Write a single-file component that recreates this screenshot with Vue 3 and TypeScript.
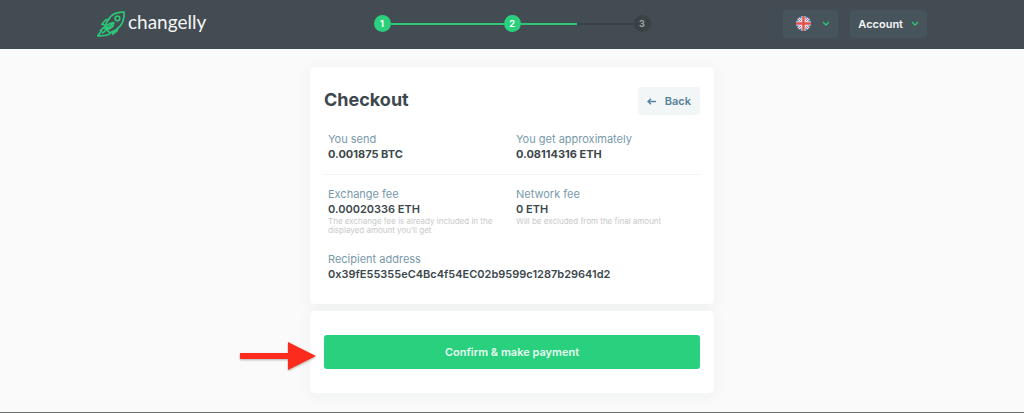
<script setup lang="ts">
interface Step {
  label: string
  done: boolean
}

interface Detail {
  title: string
  value: string
  note?: string
}

const steps: Step[] = [
  { label: '1', done: true },
  { label: '2', done: true },
  { label: '3', done: false },
]

const amounts: Detail[] = [
  { title: 'You send', value: '0.001875 BTC' },
  { title: 'You get approximately', value: '0.08114316 ETH' },
]

const fees: Detail[] = [
  {
    title: 'Exchange fee',
    value: '0.00020336 ETH',
    note: 'The exchange fee is already included in the displayed amount you’ll get',
  },
  { title: 'Network fee', value: '0 ETH', note: 'Will be excluded from the final amount' },
]

const recipient: Detail = {
  title: 'Recipient address',
  value: '0x39fE55355eC4Bc4f54EC02b9599c1287b29641d2',
}
</script>

<template>
  <div class="page">
    <header class="header">
      <div class="header-inner">
        <a class="logo" href="#">
          <svg class="rocket" viewBox="50 28 85 78" aria-hidden="true">
            <path d="M132 31C112 30 95 37 86 51C79 61 75 70 73 80L90 94C101 90 113 82 121 72C130 61 133 48 132 31Z" />
            <path d="M86 53L76 55L65 68L76 71" />
            <path d="M113 80L111 88L98 98L97 90" />
            <circle cx="112" cy="50" r="7" />
            <path d="M79 84C77 74 82 65 101 63C100 73 94 82 79 84ZM79 84L94 69" />
            <path d="M71 77L60 87L64 88L52 103C65 104 78 102 89 97" />
            <path d="M67 94L75 88" />
          </svg>
          <span>changelly</span>
        </a>

        <ol class="steps">
          <li v-for="step in steps" :key="step.label" class="step" :class="{ done: step.done }">
            <span class="dot">{{ step.label }}</span>
          </li>
        </ol>

        <div class="actions">
          <button class="menu language" type="button" aria-label="Language: English">
            <svg class="flag" viewBox="0 0 30 30" aria-hidden="true">
              <clipPath id="flag-round"><circle cx="15" cy="15" r="15" /></clipPath>
              <g clip-path="url(#flag-round)">
                <path fill="#3f8ccb" d="M0 0h30v30H0z" />
                <path stroke="#f5eded" stroke-width="5" d="M2 2l26 26M28 2L2 28" />
                <path stroke="#e0524c" stroke-width="2" d="M2 2l26 26M28 2L2 28" />
                <path stroke="#f5eded" stroke-width="8" d="M15 0v30M0 15h30" />
                <path stroke="#e0524c" stroke-width="5" d="M15 0v30M0 15h30" />
              </g>
            </svg>
            <svg class="chevron" viewBox="0 0 8 5" aria-hidden="true"><path d="M1 1l3 3 3-3" /></svg>
          </button>
          <button class="menu account" type="button">
            <span>Account</span>
            <svg class="chevron" viewBox="0 0 8 5" aria-hidden="true"><path d="M1 1l3 3 3-3" /></svg>
          </button>
        </div>
      </div>
    </header>

    <main class="checkout">
      <section class="card summary">
        <div class="title-row">
          <h1>Checkout</h1>
          <button class="back" type="button">
            <svg viewBox="0 0 9 7" aria-hidden="true"><path d="M9 3.5H1M4 .8L1 3.5l3 2.7" /></svg>
            <span>Back</span>
          </button>
        </div>
        <dl class="details amounts">
          <div v-for="item in amounts" :key="item.title">
            <dt>{{ item.title }}</dt>
            <dd>{{ item.value }}</dd>
          </div>
        </dl>
        <dl class="details fees">
          <div v-for="item in fees" :key="item.title">
            <dt>{{ item.title }}</dt>
            <dd>{{ item.value }}</dd>
            <dd class="note">{{ item.note }}</dd>
          </div>
        </dl>
        <dl class="details recipient">
          <div>
            <dt>{{ recipient.title }}</dt>
            <dd>{{ recipient.value }}</dd>
          </div>
        </dl>
      </section>

      <section class="card payment">
        <button class="confirm" type="button">Confirm &amp; make payment</button>
        <svg class="pointer" viewBox="0 0 76 28" aria-hidden="true">
          <path d="M0 11h48V0l28 14-28 14V17H0z" />
        </svg>
      </section>
    </main>
  </div>
</template>

<style>
body {
  background: #fafafa;
}
</style>

<style scoped>
.page {
  box-sizing: border-box;
  min-height: 100vh;
  border-bottom: 1px solid #6b706f;
  background: #fafafa;
  color: #3d484d;
  font-family: Inter, "Open Sans", sans-serif;
  font-size: 11px;
  line-height: 14px;
}

button {
  border: 0;
  font: inherit;
  cursor: pointer;
}

.header {
  background: #444c53;
}

.header-inner {
  display: grid;
  grid-template-columns: 1fr auto 1fr;
  align-items: center;
  box-sizing: border-box;
  max-width: 830px;
  height: 49px;
  margin: 0 auto;
  padding-bottom: 2px;
}

.logo {
  display: flex;
  align-items: center;
  gap: 3px;
  color: #f4f6f6;
  font-family: Lato, sans-serif;
  font-size: 19px;
  line-height: 24px;
  text-decoration: none;
}

.logo span {
  padding-bottom: 3px;
}

.rocket {
  width: 28px;
  height: 26px;
  fill: none;
  stroke: #2bc877;
  stroke-width: 5;
  stroke-linejoin: round;
  stroke-linecap: round;
}

.steps {
  display: flex;
  margin: 0;
  padding: 0;
  list-style: none;
}

.step {
  display: flex;
  align-items: center;
}

.step + .step::before {
  width: 113px;
  height: 2px;
  background: #2bc877;
  content: "";
}

.step:last-child::before {
  background: linear-gradient(90deg, #2bc877 50%, #3a4246 50%);
}

.dot {
  width: 17px;
  border-radius: 50%;
  background: #3a4246;
  color: #9da3a5;
  font-size: 9px;
  font-weight: 700;
  line-height: 17px;
  text-align: center;
}

.done .dot {
  background: #2bd07d;
  color: #fff;
}

.actions {
  display: flex;
  justify-content: flex-end;
  gap: 12px;
}

.menu {
  display: flex;
  align-items: center;
  height: 28px;
  padding: 0 8px;
  border-radius: 3px;
  background: #48545b;
  color: #f4f6f6;
  font-weight: 600;
}

.language {
  gap: 11px;
  padding-left: 13px;
}

.account {
  gap: 8px;
}

.flag {
  width: 15px;
  height: 15px;
}

.chevron {
  width: 8px;
  height: 5px;
  fill: none;
  stroke: #2bc877;
  stroke-width: 1.3;
}

.checkout {
  display: grid;
  gap: 7px;
  max-width: 404px;
  margin: 0 auto;
  padding: 18px 0;
}

.card {
  padding: 20px 14px 22px;
  border-radius: 5px;
  background: #fff;
  box-shadow: 0 2px 14px rgb(70 95 100 / 7%);
}

.title-row {
  display: flex;
  align-items: flex-start;
  justify-content: space-between;
}

h1 {
  margin: 0;
  font-size: 18px;
  font-weight: 700;
  line-height: 26px;
}

.back {
  display: flex;
  align-items: center;
  gap: 9px;
  height: 28px;
  padding: 0 9px;
  border-radius: 3px;
  background: #f2f6f7;
  color: #57829a;
  font-weight: 600;
}

.back svg {
  width: 9px;
  height: 7px;
  fill: none;
  stroke: currentColor;
  stroke-width: 1.5;
}

.details {
  display: grid;
  grid-template-columns: 1fr 1fr;
  column-gap: 4px;
  margin: 0;
  padding-left: 4px;
}

dt {
  color: #7899ab;
}

dd {
  margin: 0;
  font-weight: 600;
  line-height: 16px;
}

.note {
  max-width: 170px;
  color: #c7c9ca;
  font-size: 8px;
  font-weight: 400;
  line-height: 9px;
}

.amounts {
  padding-top: 17px;
  padding-bottom: 12px;
  border-bottom: 1px solid #f3f4f4;
}

.amounts dd {
  font-weight: 700;
}

.fees {
  padding-top: 12px;
}

.recipient {
  grid-template-columns: 1fr;
  padding-top: 17px;
}

.payment {
  position: relative;
  padding: 24px 14px;
}

.confirm {
  display: block;
  width: 100%;
  height: 34px;
  border-radius: 3px;
  background: #29d07e;
  color: #e8fbf1;
  font-weight: 600;
}

.pointer {
  position: absolute;
  top: 31px;
  left: -70px;
  width: 76px;
  height: 28px;
  fill: #fb2b1d;
  filter: drop-shadow(0 1px 1px rgb(0 0 0 / 30%));
}
</style>
